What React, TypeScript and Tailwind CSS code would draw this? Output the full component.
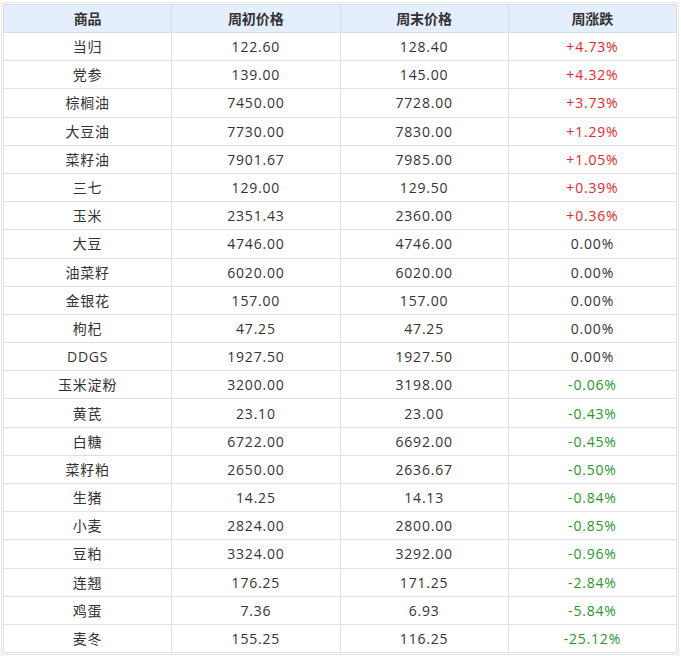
const rows: [string, string, string, string][] = [
  ["当归", "122.60", "128.40", "+4.73%"],
  ["党参", "139.00", "145.00", "+4.32%"],
  ["棕榈油", "7450.00", "7728.00", "+3.73%"],
  ["大豆油", "7730.00", "7830.00", "+1.29%"],
  ["菜籽油", "7901.67", "7985.00", "+1.05%"],
  ["三七", "129.00", "129.50", "+0.39%"],
  ["玉米", "2351.43", "2360.00", "+0.36%"],
  ["大豆", "4746.00", "4746.00", "0.00%"],
  ["油菜籽", "6020.00", "6020.00", "0.00%"],
  ["金银花", "157.00", "157.00", "0.00%"],
  ["枸杞", "47.25", "47.25", "0.00%"],
  ["DDGS", "1927.50", "1927.50", "0.00%"],
  ["玉米淀粉", "3200.00", "3198.00", "-0.06%"],
  ["黄芪", "23.10", "23.00", "-0.43%"],
  ["白糖", "6722.00", "6692.00", "-0.45%"],
  ["菜籽粕", "2650.00", "2636.67", "-0.50%"],
  ["生猪", "14.25", "14.13", "-0.84%"],
  ["小麦", "2824.00", "2800.00", "-0.85%"],
  ["豆粕", "3324.00", "3292.00", "-0.96%"],
  ["连翘", "176.25", "171.25", "-2.84%"],
  ["鸡蛋", "7.36", "6.93", "-5.84%"],
  ["麦冬", "155.25", "116.25", "-25.12%"],
];

// red for rises, green for falls, plain for flat
function changeColor(v: string) {
  if (v.startsWith("+")) return "text-[#e8262d]";
  if (v.startsWith("-")) return "text-[#27962a]";
  return "text-[#333333]";
}

export default function App() {
  return (
    <div
      className="w-[681px] h-[656px] bg-white pl-[1px] pt-[2px]"
      style={{ fontFamily: '"Open Sans", "Noto Sans CJK SC", sans-serif' }}
    >
      <div className="w-[678px] border border-[#e3e3e3] p-[1px]">
        <table className="w-full border-collapse table-fixed text-[14px] text-[#333333]">
          <thead>
            <tr className="bg-[#e5eefc] h-[28px]">
              <th className="border border-[#d9dee6] font-bold text-center">商品</th>
              <th className="border border-[#d9dee6] font-bold text-center">周初价格</th>
              <th className="border border-[#d9dee6] font-bold text-center">周末价格</th>
              <th className="border border-[#d9dee6] font-bold text-center">周涨跌</th>
            </tr>
          </thead>
          <tbody>
            {rows.map((r) => (
              <tr key={r[0]} className="h-[28.2px]">
                <td className="border border-[#e0e0e0] text-center p-0 tracking-[0.8px]">{r[0]}</td>
                <td className="border border-[#e0e0e0] text-center p-0 tracking-[0.8px]">{r[1]}</td>
                <td className="border border-[#e0e0e0] text-center p-0 tracking-[0.8px]">{r[2]}</td>
                <td className={`border border-[#e0e0e0] text-center p-0 tracking-[0.8px] ${changeColor(r[3])}`}>
                  {r[3]}
                </td>
              </tr>
            ))}
          </tbody>
        </table>
      </div>
    </div>
  );
}
